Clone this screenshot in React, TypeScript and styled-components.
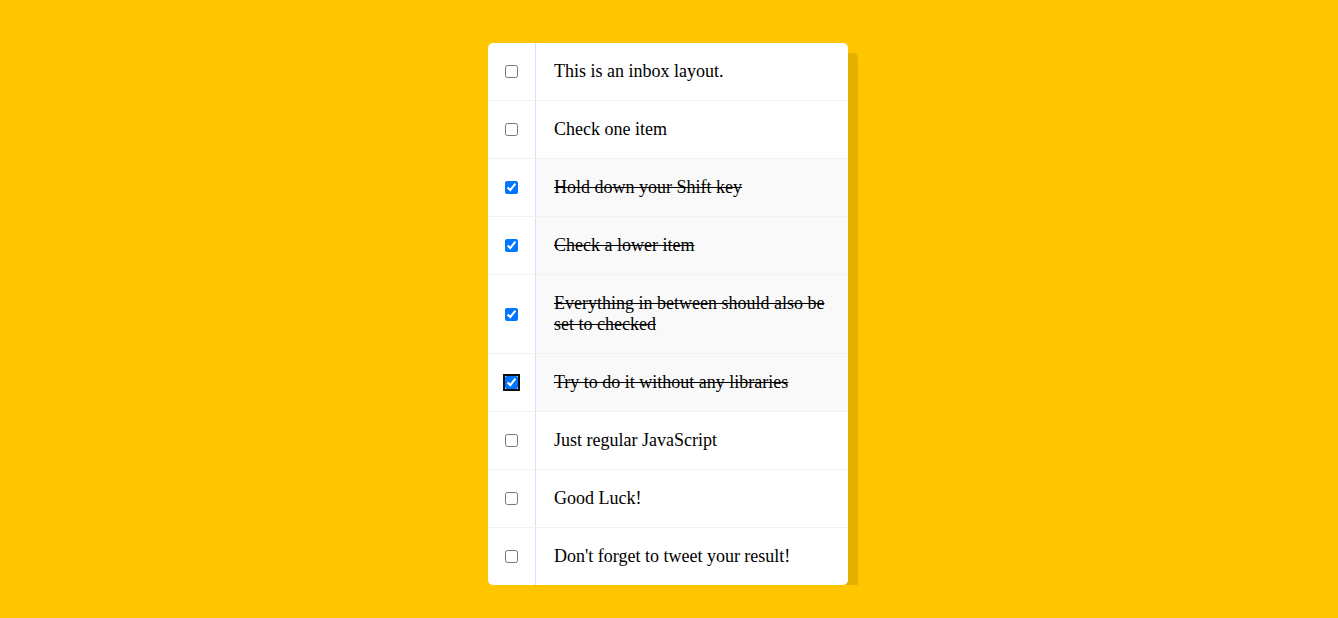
import React from "react";
import styled, { createGlobalStyle } from "styled-components";

const Global = createGlobalStyle`
  html { background: #ffc600; }
  body { margin: 0; font-family: "Liberation Serif", "Times New Roman", serif; }
`;

const Inbox = styled.div`
  width: 360px;
  margin: 43px 0 0 calc(50% - 181px);
  background: #ffffff;
  border-radius: 5px;
  box-shadow: 10px 10px 0 rgba(0, 0, 0, 0.1);
`;

const Item = styled.div`
  display: flex;
  align-items: stretch;
  border-bottom: 1px solid #f1f1f1;
  &:last-child { border-bottom: 0; }
`;

const CheckCell = styled.div`
  display: flex;
  align-items: center;
`;

const Box = styled.input<{ $focused?: boolean }>`
  width: 13px;
  height: 13px;
  margin: 0 17px;
  ${(p) => (p.$focused ? "outline: 2px solid #101010; outline-offset: 0px; border-radius: 3px;" : "")}
`;

const Text = styled.p<{ $done: boolean }>`
  margin: 0;
  flex: 1;
  padding: 18px;
  font-size: 18px;
  color: #000;
  border-left: 1px solid #d1e2ff;
  background: ${(p) => (p.$done ? "#f9f9f9" : "transparent")};
  text-decoration: ${(p) => (p.$done ? "line-through" : "none")};
`;

const items = [
  { t: "This is an inbox layout.", c: false },
  { t: "Check one item", c: false },
  { t: "Hold down your Shift key", c: true },
  { t: "Check a lower item", c: true },
  { t: "Everything in between should also be set to checked", c: true },
  { t: "Try to do it without any libraries", c: true, f: true },
  { t: "Just regular JavaScript", c: false },
  { t: "Good Luck!", c: false },
  { t: "Don't forget to tweet your result!", c: false },
];

export default function App() {
  return (
    <>
      <Global />
      <Inbox>
        {items.map((it, i) => (
          <Item key={i}>
            <CheckCell>
              <Box type="checkbox" defaultChecked={it.c} $focused={it.f} />
            </CheckCell>
            <Text $done={it.c}>{it.t}</Text>
          </Item>
        ))}
      </Inbox>
    </>
  );
}
